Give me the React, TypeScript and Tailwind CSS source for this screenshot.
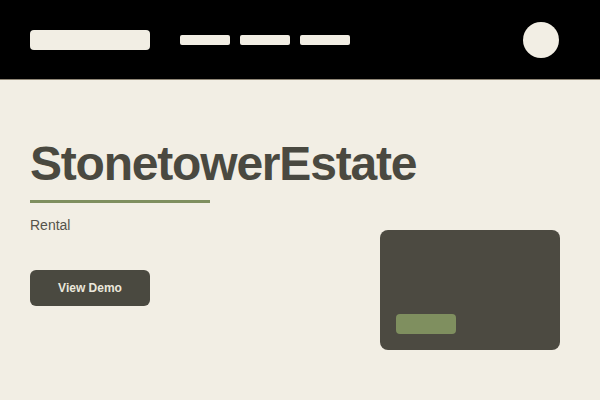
export default function App() {
  return (
    <div
      className="h-[400px] w-[600px] overflow-hidden bg-[#f2eee4]"
      style={{ fontFamily: '"Liberation Sans", Arial, sans-serif' }}
    >
      {/* Header */}
      <header className="flex h-20 items-center border-b border-[#8f8676] bg-black pl-[30px] pr-[41px]">
        <div className="h-5 w-[120px] rounded-[4px] bg-[#f2eee4]" />
        <nav className="ml-[30px] flex gap-[10px]">
          <div className="h-[10px] w-[50px] rounded-[2px] bg-[#f2eee4]" />
          <div className="h-[10px] w-[50px] rounded-[2px] bg-[#f2eee4]" />
          <div className="h-[10px] w-[50px] rounded-[2px] bg-[#f2eee4]" />
        </nav>
        <div className="ml-auto h-9 w-9 rounded-full bg-[#f2eee4]" />
      </header>

      {/* Hero */}
      <main className="flex pl-[30px] pr-[40px] pt-[60px]">
        <div className="flex min-w-0 flex-1 flex-col items-start">
          <h1 className="whitespace-nowrap text-5xl font-bold leading-none tracking-tight text-[#4a4940]">
            StonetowerEstate
          </h1>
          <div className="mt-[12px] h-[3px] w-[180px] bg-[#7f8f5f]" />
          <p className="mt-3 text-sm text-[#55534a]">Rental</p>
          <button className="mt-[35px] h-9 w-[120px] rounded-md bg-[#4a4940] text-xs font-bold text-[#ebe7dc]">
            View Demo
          </button>
        </div>
        <div className="mt-[90px] flex h-[120px] w-[180px] shrink-0 items-end rounded-lg bg-[#4c4a41] p-4">
          <div className="h-5 w-[60px] rounded bg-[#7f8f5f]" />
        </div>
      </main>
    </div>
  );
}
